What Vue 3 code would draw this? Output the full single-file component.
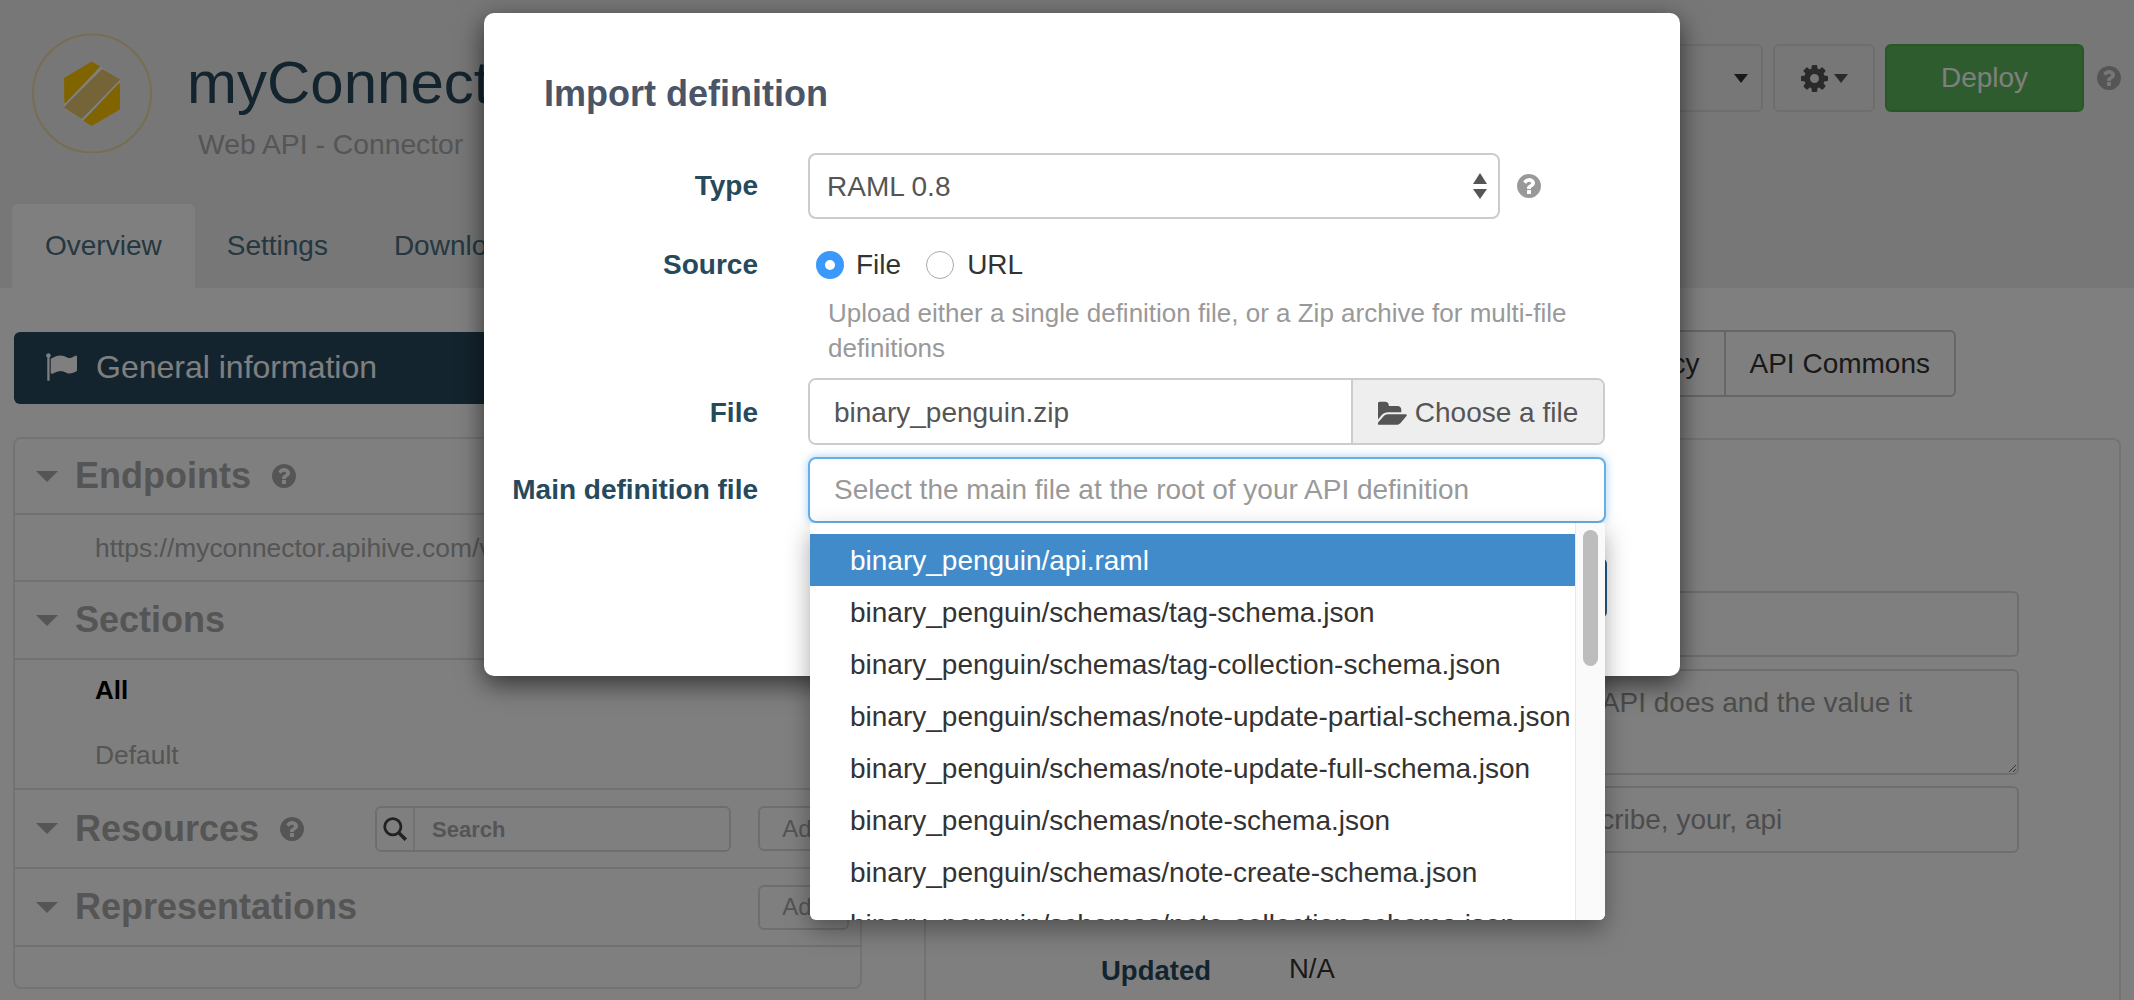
<script setup>
const files = [
  "binary_penguin/api.raml",
  "binary_penguin/schemas/tag-schema.json",
  "binary_penguin/schemas/tag-collection-schema.json",
  "binary_penguin/schemas/note-update-partial-schema.json",
  "binary_penguin/schemas/note-update-full-schema.json",
  "binary_penguin/schemas/note-schema.json",
  "binary_penguin/schemas/note-create-schema.json",
  "binary_penguin/schemas/note-collection-schema.json",
];
</script>

<template>
  <div class="page">
    <svg class="defs" width="0" height="0">
      <symbol id="help" viewBox="0 0 1536 1536">
        <path d="M896 1248v-192q0-14-9-23t-23-9h-192q-14 0-23 9t-9 23v192q0 14 9 23t23 9h192q14 0 23-9t9-23zm256-672q0-88-55.5-163t-138.5-116-170-41q-243 0-371 213-15 24 8 42l132 100q7 6 19 6 16 0 25-12 53-68 86-92 34-24 86-24 48 0 85.5 26t37.5 59q0 38-20 61t-68 45q-63 28-115.5 86.5t-52.5 125.5v36q0 14 9 23t23 9h192q14 0 23-9t9-23q0-19 21.5-49.5t54.5-49.5q32-18 49-28.5t46-35 44.5-48 28-60.5 12.5-81zm384 192q0 209-103 385.5t-279.5 279.5-385.5 103-385.5-103-279.5-279.5-103-385.5 103-385.5 279.5-279.5 385.5-103 385.5 103 279.5 279.5 103 385.5z" />
      </symbol>
    </svg>

    <header class="top">
      <div class="brand">
        <svg class="logo" viewBox="0 0 120 120">
          <circle cx="60" cy="60.5" r="59" fill="none" stroke="#f0dba0" stroke-width="2" />
          <g stroke-width="1.5" stroke-linejoin="round">
            <polygon points="59.7,29.5 87.2,46 87.2,76 59.7,92.2 32.8,75 32.8,45.5" fill="#fff" stroke="#fff" />
            <polygon points="59.7,29.5 67,33.7 33,69.5 32.8,45.5" fill="#ffc800" stroke="#ffc800" />
            <polygon points="70.3,37 87.2,46.5 49.7,85 32.8,74.3" fill="#e8c870" stroke="#e8c870" />
            <polygon points="87.2,51 87.2,76 59.7,92.2 52.3,87.7" fill="#ffc800" stroke="#ffc800" />
          </g>
        </svg>
        <div class="brand-text">
          <h1>myConnector</h1>
          <p>Web API - Connector</p>
        </div>
      </div>

      <div class="actions">
        <button class="btn env"><span class="caret"></span></button>
        <button class="btn gear">
          <svg class="gear-icon" viewBox="0 0 1536 1536">
            <path d="M1024 768q0-106-75-181t-181-75-181 75-75 181 75 181 181 75 181-75 75-181zm512-109v222q0 12-8 23t-20 13l-185 28q-19 54-39 91 35 50 107 138 10 12 10 25t-9 23q-27 37-99 108t-94 71q-12 0-26-9l-138-108q-44 23-91 38-16 136-29 186-7 28-36 28h-222q-14 0-24.5-8.5t-11.5-21.5l-28-184q-49-16-90-37l-141 107q-10 9-25 9-14 0-25-11-126-114-165-168-7-10-7-23 0-12 8-23 15-21 51-66.5t54-70.5q-27-50-41-99l-183-27q-13-2-21-12.5t-8-23.5v-222q0-12 8-23t19-13l186-28q14-46 39-92-40-57-107-138-10-12-10-24 0-10 9-23 26-36 98.5-107.5t94.5-71.5q13 0 26 10l138 107q44-23 91-38 16-136 29-186 7-28 36-28h222q14 0 24.5 8.5t11.5 21.5l28 184q49 16 90 37l142-107q9-9 24-9 13 0 25 10 129 119 165 170 7 8 7 22 0 12-8 23-15 21-51 66.5t-54 70.5q26 50 41 98l183 28q13 2 21 12.5t8 23.5z" />
          </svg>
          <span class="caret"></span>
        </button>
        <button class="btn deploy">Deploy</button>
        <svg class="help top-help"><use href="#help" /></svg>
      </div>

      <nav class="tabs">
        <a class="tab active">Overview</a>
        <a class="tab">Settings</a>
        <a class="tab">Downloads</a>
      </nav>
    </header>

    <main class="content">
      <section class="left">
        <div class="info-bar">
          <svg class="flag" viewBox="0 0 1792 1792">
            <path d="M320 256q0 72-64 110v1266q0 13-9.5 22.5t-22.5 9.5h-64q-13 0-22.5-9.5t-9.5-22.5v-1266q-64-38-64-110 0-53 37.5-90.5t90.5-37.5 90.5 37.5 37.5 90.5zm1472 64v763q0 25-12.5 38.5t-39.5 27.5q-215 116-369 116-61 0-123.5-22t-108.5-48-115.5-48-142.5-22q-192 0-464 146-17 9-33 9-26 0-45-19t-19-45v-742q0-32 31-55 21-14 79-43 236-120 421-120 107 0 200 29t219 88q38 19 88 19 54 0 117.5-21t110-47 88-47 54.5-21q26 0 45 19t19 45z" />
          </svg>
          General information
        </div>

        <div class="panel">
          <div class="sec-head h77">
            <span class="tri"></span>
            <h2>Endpoints</h2>
            <svg class="help"><use href="#help" /></svg>
          </div>
          <div class="sec-body link-row">https://myconnector.apihive.com/v1</div>

          <div class="sec-head h78">
            <span class="tri"></span>
            <h2>Sections</h2>
          </div>
          <div class="sec-body list-row">
            <a class="current">All</a>
            <a>Default</a>
          </div>

          <div class="sec-head h79">
            <span class="tri"></span>
            <h2>Resources</h2>
            <svg class="help"><use href="#help" /></svg>
            <div class="search">
              <span class="search-addon">
                <svg viewBox="0 0 24 24" width="26" height="26">
                  <circle cx="10" cy="10" r="7.5" fill="none" stroke="#444" stroke-width="2.6" />
                  <line x1="15.5" y1="15.5" x2="22" y2="22" stroke="#444" stroke-width="3.2" />
                </svg>
              </span>
              <input class="search-input" placeholder="Search" />
            </div>
            <button class="btn add">Add</button>
          </div>

          <div class="sec-head h78">
            <span class="tri"></span>
            <h2>Representations</h2>
            <button class="btn add solo">Add</button>
          </div>
        </div>
      </section>

      <section class="right">
        <div class="view-group">
          <a class="view-btn">Policy</a>
          <a class="view-btn">API Commons</a>
        </div>
        <div class="panel details">
          <input class="field" />
          <textarea class="field area" placeholder="Describe what your API does and the value it"></textarea>
          <input class="field tags" placeholder="describe, your, api" />
          <div class="meta">
            <strong>Updated</strong>
            <span>N/A</span>
          </div>
        </div>
      </section>
    </main>

    <div class="backdrop"></div>

    <div class="modal">
      <h3>Import definition</h3>

      <div class="row type-row">
        <label>Type</label>
        <div class="select-wrap">
          <select class="control">
            <option>RAML 0.8</option>
          </select>
          <svg class="updown" viewBox="0 0 14 26" width="14" height="26">
            <polygon points="7,0 14,11 0,11" />
            <polygon points="0,16 14,16 7,26" />
          </svg>
        </div>
        <svg class="help modal-help"><use href="#help" /></svg>
      </div>

      <div class="row source-row">
        <label>Source</label>
        <div class="radios">
          <span class="radio on"></span>
          <span>File</span>
          <span class="radio"></span>
          <span>URL</span>
        </div>
      </div>
      <p class="hint">Upload either a single definition file, or a Zip archive for multi-file definitions</p>

      <div class="row file-row">
        <label>File</label>
        <div class="file-group">
          <input class="file-name" value="binary_penguin.zip" readonly />
          <button class="choose">
            <svg class="folder" viewBox="0 0 1792 1536">
              <path d="M1781 931q0 35-35 73l-336 396q-43 51-120.5 86.5t-143.5 35.5h-1088q-34 0-60.5-13t-26.5-43q0-35 35-73l336-396q43-51 120.5-86.5t143.5-35.5h1088q34 0 60.5 13t26.5 43zm-343-344v160h-832q-94 0-197 47.5t-164 119.5l-337 396-5 6q0-4-.5-12.5t-.5-12.5v-960q0-92 66-158t158-66h320q92 0 158 66t66 158v32h544q92 0 158 66t66 158z" />
            </svg>
            Choose a file
          </button>
        </div>
      </div>

      <div class="row main-row">
        <label>Main definition file</label>
        <div class="combo">
          <input class="control focus" placeholder="Select the main file at the root of your API definition" />
          <div class="dropdown">
            <ul>
              <li v-for="(file, i) in files" :key="file" :class="{ selected: i === 0 }">{{ file }}</li>
            </ul>
            <div class="scrollbar"><span></span></div>
          </div>
        </div>
      </div>

      <div class="footer">
        <button class="primary">Import</button>
      </div>
    </div>
  </div>
</template>

<style>
html,
body {
  margin: 0;
  background: #fff;
}
</style>

<style scoped>
.page {
  position: relative;
  width: 2134px;
  height: 1000px;
  overflow: hidden;
  background: #fff;
  color: #333;
  font-family: "Liberation Sans", Arial, sans-serif;
  font-size: 28px;
}
.defs {
  position: absolute;
}
.help {
  width: 24px;
  height: 24px;
  fill: #aaa;
  flex: none;
}

/* header */
.top {
  height: 288px;
  box-sizing: border-box;
  background: #eee;
  display: grid;
  grid-template-columns: 1fr auto;
  grid-template-rows: 204px 84px;
}
.brand {
  display: flex;
  padding: 33px 0 0 32px;
}
.logo {
  width: 120px;
  height: 120px;
  flex: none;
}
.brand-text {
  margin-left: 35px;
}
.brand-text h1 {
  margin: 17px 0 0;
  font-size: 60px;
  line-height: 66px;
  font-weight: 400;
  color: #26495c;
}
.brand-text p {
  margin: 12px 0 0 11px;
  font-size: 28.3px;
  line-height: 32px;
  color: #aaa;
}
.actions {
  display: flex;
  align-items: center;
  align-self: start;
  margin-top: 44px;
  padding-right: 13px;
}
.btn {
  font: inherit;
  background: transparent;
  border: 2px solid #ddd;
  border-radius: 6px;
  height: 68px;
  box-sizing: border-box;
  color: #333;
}
.env {
  width: 300px;
  display: flex;
  align-items: center;
  justify-content: flex-end;
  padding-right: 13px;
}
.caret {
  display: inline-block;
  border-top: 9px solid #333;
  border-left: 7px solid transparent;
  border-right: 7px solid transparent;
}
.gear {
  width: 102px;
  margin-left: 10px;
  display: flex;
  align-items: center;
  justify-content: center;
  gap: 6px;
  padding: 0;
}
.gear .caret {
  border-top-color: #555;
}
.gear-icon {
  width: 27px;
  height: 27px;
  fill: #555;
}
.deploy {
  width: 199px;
  margin-left: 10px;
  background: #5cb85c;
  border-color: #4cae4c;
  color: #fff;
  font-size: 28px;
}
.top-help {
  margin-left: 13px;
}
.tabs {
  grid-column: 1 / -1;
  display: flex;
  align-items: stretch;
  padding-left: 12px;
}
.tab {
  display: flex;
  align-items: center;
  padding: 0 33px;
  font-size: 28px;
  color: #4a6e80;
  border-radius: 6px 6px 0 0;
}
.tab.active {
  background: #fff;
  margin-right: -1px;
}

/* content */
.content {
  display: flex;
  height: 712px;
}
.left {
  width: 849px;
  margin-left: 13px;
  padding-top: 44px;
  box-sizing: border-box;
}
.info-bar {
  display: flex;
  align-items: center;
  height: 72px;
  margin-left: 1px;
  padding: 0 0 2px 31px;
  box-sizing: border-box;
  border-radius: 6px;
  background: #26495c;
  color: #fff;
  font-size: 32px;
}
.flag {
  width: 32px;
  height: 32px;
  fill: #fff;
  margin-right: 19px;
}
.panel {
  border: 2px solid #e6e6e6;
  border-radius: 8px;
  box-sizing: border-box;
}
.left .panel {
  margin-top: 33px;
  height: 552px;
}
.sec-head {
  display: flex;
  align-items: center;
  padding-left: 21px;
  border-bottom: 2px solid #e2e2e2;
  box-sizing: border-box;
}
.h77 {
  height: 76px;
}
.h78 {
  height: 78px;
}
.h79 {
  height: 79px;
}
.tri {
  border-top: 11px solid #aaa;
  border-left: 11px solid transparent;
  border-right: 11px solid transparent;
  margin-right: 17px;
}
.sec-head h2 {
  margin: 0;
  font-size: 36px;
  font-weight: 700;
  color: #aaa;
}
.sec-head .help {
  margin-left: 21px;
}
.sec-body {
  padding-left: 80px;
  border-bottom: 2px solid #e2e2e2;
  box-sizing: border-box;
  color: #aaa;
  font-size: 26.4px;
}
.link-row {
  height: 67px;
  line-height: 66px;
  white-space: nowrap;
  overflow: hidden;
}
.list-row {
  height: 130px;
  display: flex;
  flex-direction: column;
  padding-top: 14px;
  gap: 32px;
}
.list-row a {
  line-height: 33px;
}
.list-row .current {
  color: #000;
  font-weight: 700;
  font-size: 26px;
}
.search {
  display: flex;
  width: 356px;
  height: 46px;
  margin-left: auto;
  border: 2px solid #ddd;
  border-radius: 6px;
  box-sizing: border-box;
}
.search-addon {
  width: 36px;
  display: flex;
  align-items: center;
  justify-content: center;
  border-right: 2px solid #e6e6e6;
}
.search-input {
  flex: 1;
  min-width: 0;
  border: 0;
  outline: 0;
  background: transparent;
  padding: 2px 0 0 17px;
  font: 700 22px "Liberation Sans", Arial, sans-serif;
}
.search-input::placeholder {
  color: #aaa;
}
.add {
  width: 91px;
  height: 45px;
  margin-left: 27px;
  margin-right: 11px;
  font-size: 24px;
  color: #aaa;
  padding: 0;
}
.solo {
  margin-left: auto;
}
.right {
  width: 1197px;
  margin-left: 62px;
}
.view-group {
  display: flex;
  justify-content: flex-end;
  margin: 42px 165px 0 0;
  height: 67px;
}
.view-btn {
  display: flex;
  align-items: center;
  padding: 0 24px;
  border: 2px solid #ccc;
  font-size: 28px;
  color: #333;
}
.view-btn + .view-btn {
  border-left: 0;
  border-radius: 0 6px 6px 0;
}
.details {
  margin-top: 41px;
  height: 640px;
  padding: 151px 0 0 339px;
}
.field {
  display: block;
  box-sizing: border-box;
  width: 754px;
  height: 66px;
  margin: 0 0 12px;
  border: 2px solid #ddd;
  border-radius: 6px;
  padding: 0 22px;
  outline: 0;
  font: 28px "Liberation Sans", Arial, sans-serif;
  background: #fff;
}
.field::placeholder {
  color: #999;
}
.area {
  height: 106px;
  padding: 16px 22px 16px 88px;
  resize: vertical;
  margin-bottom: 11px;
}
.tags {
  height: 67px;
  padding-left: 288px;
}
.meta {
  display: flex;
  align-items: flex-start;
  margin: 99px 0 0 -164px;
  gap: 78px;
  line-height: 34px;
  font-size: 27.5px;
}
.meta strong {
  color: #26495c;
  margin-top: 2px;
}

/* modal */
.backdrop {
  position: absolute;
  inset: 0;
  background: rgba(0, 0, 0, 0.5);
}
.modal {
  position: absolute;
  left: 484px;
  top: 13px;
  width: 1196px;
  height: 663px;
  padding-top: 61px;
  box-sizing: border-box;
  background: #fff;
  border-radius: 10px;
  box-shadow: 0 8px 26px rgba(0, 0, 0, 0.6);
}
.modal h3 {
  margin: 0 0 39px 60px;
  font-size: 36px;
  line-height: 40px;
  font-weight: 700;
  color: #4a5568;
}
.row {
  display: flex;
  align-items: center;
}
.row label {
  width: 274px;
  margin-right: 50px;
  text-align: right;
  font-weight: 700;
  color: #26495c;
  flex: none;
}
.file-row label {
  padding-top: 2px;
}
.control {
  display: block;
  box-sizing: border-box;
  height: 66px;
  border: 2px solid #ccc;
  border-radius: 8px;
  background: #fff;
  color: #555;
  outline: 0;
  font: 28px "Liberation Sans", Arial, sans-serif;
  padding: 0 17px;
}
.select-wrap {
  position: relative;
}
.select-wrap select {
  width: 692px;
  appearance: none;
}
.updown {
  position: absolute;
  right: 13px;
  top: 20px;
  fill: #555;
}
.modal-help {
  margin-left: 17px;
  fill: #999;
}
.source-row {
  margin-top: 32px;
  height: 28px;
}
.radios {
  display: flex;
  align-items: center;
  margin-left: 8px;
  color: #333;
}
.radio {
  width: 28px;
  height: 28px;
  box-sizing: border-box;
  border-radius: 50%;
  border: 1px solid #aaa;
  background: #fff;
  margin-right: 13px;
}
.radio.on {
  margin-right: 12px;
  border: 9.5px solid #3b99fc;
}
.radios span:nth-child(2) {
  margin-right: 25px;
}
.hint {
  width: 760px;
  margin: 17px 0 12px 344px;
  font-size: 26px;
  line-height: 35px;
  color: #999;
}
.file-group {
  display: flex;
  width: 797px;
  height: 67px;
  box-sizing: border-box;
  border: 2px solid #ccc;
  border-radius: 8px;
  overflow: hidden;
}
.file-name {
  flex: 1;
  min-width: 0;
  border: 0;
  outline: 0;
  padding: 2px 0 0 24px;
  font: 28px "Liberation Sans", Arial, sans-serif;
  color: #555;
}
.choose {
  width: 252px;
  display: flex;
  align-items: center;
  justify-content: center;
  gap: 8px;
  padding: 2px 0 0;
  border: 0;
  border-left: 2px solid #ccc;
  background: #eee;
  color: #555;
  font: 28px "Liberation Sans", Arial, sans-serif;
}
.folder {
  width: 29px;
  height: 25px;
  fill: #555;
}
.main-row {
  margin-top: 12px;
}
.combo {
  position: relative;
}
.focus {
  width: 798px;
  padding-left: 24px;
  border-color: #66afe9;
  box-shadow: 0 0 10px rgba(102, 175, 233, 0.6);
}
.focus::placeholder {
  color: #999;
}
.dropdown {
  position: absolute;
  top: 100%;
  left: 2px;
  width: 795px;
  height: 397px;
  display: flex;
  overflow: hidden;
  background: #fff;
  border-radius: 0 0 6px 6px;
  box-shadow: 0 10px 24px rgba(0, 0, 0, 0.35);
  z-index: 2;
}
.dropdown ul {
  flex: 1;
  min-width: 0;
  list-style: none;
  margin: 0;
  padding: 11px 0 0;
}
.dropdown li {
  height: 52px;
  line-height: 53px;
  padding-left: 40px;
  white-space: nowrap;
  font-size: 28px;
  color: #333;
}
.dropdown li.selected {
  background: #428bca;
  color: #fff;
}
.scrollbar {
  width: 30px;
  flex: none;
  box-sizing: border-box;
  background: #fafafa;
  border-left: 1px solid #e8e8e8;
  padding: 7px 0 0 7px;
}
.scrollbar span {
  display: block;
  width: 15px;
  height: 136px;
  border-radius: 8px;
  background: #bdbdbd;
}
.footer {
  display: flex;
  justify-content: flex-end;
  margin-top: 35px;
  padding-right: 73px;
}
.primary {
  width: 140px;
  height: 60px;
  border: 0;
  border-radius: 6px;
  background: #265a88;
  color: #fff;
  font: 28px "Liberation Sans", Arial, sans-serif;
}
</style>
